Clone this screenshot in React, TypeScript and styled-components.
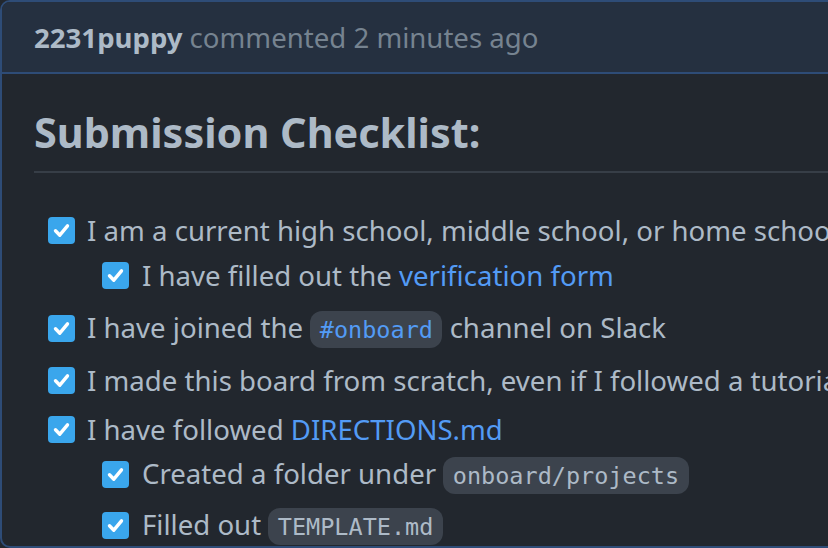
import React from 'react'
import styled, { createGlobalStyle } from 'styled-components'

const GlobalStyle = createGlobalStyle`
    html, body {
        margin: 0;
        padding: 0;
        background: #22272e;
        overflow: hidden;
    }
    body {
        font-family: "Noto Sans", "Open Sans", sans-serif;
        color: #adbac7;
    }
`

const Comment = styled.div`
    width: 960px;
    border: 2px solid #2e4c77;
    border-radius: 10px;
    overflow: hidden;
    background: #22272e;
`

const Header = styled.div`
    height: 70px;
    display: flex;
    align-items: center;
    padding-left: 32px;
    background: #253040;
    border-bottom: 2px solid #2e4c77;
    font-size: 27.6px;
    white-space: nowrap;
`

const Author = styled.span`
    font-weight: 700;
    color: #adbac7;
`

const Meta = styled.span`
    color: #768390;
    margin-left: 7px;
`

const Body = styled.div`
    padding: 32px 32px 0 32px;
`

const Title = styled.h2`
    margin: 0;
    font-size: 41.4px;
    font-weight: 700;
    line-height: 52px;
    padding-bottom: 13px;
    border-bottom: 2px solid #373e47;
    color: #adbac7;
`

const TaskList = styled.ul`
    list-style: none;
    margin: 36px 0 0 0;
    padding: 0;
`

const Task = styled.li<{ $depth: number; $space: number }>`
    display: flex;
    align-items: center;
    height: 42px;
    margin-top: ${p => p.$space}px;
    padding-left: ${p => 14 + p.$depth * 54}px;
    font-size: 27.6px;
    line-height: 42px;
    white-space: nowrap;
`

const Box = styled.span<{ $depth: number }>`
    flex: none;
    width: 27px;
    height: 27px;
    border-radius: 4px;
    background: #3aa6ec;
    display: flex;
    align-items: center;
    justify-content: center;
    margin-right: ${p => (p.$depth ? 13 : 12)}px;
`

const Link = styled.a`
    color: #539bf5;
    text-decoration: none;
`

const Code = styled.code<{ $link?: boolean }>`
    font-family: "DejaVu Sans Mono", "Liberation Mono", monospace;
    font-size: 23.5px;
    padding: 4.8px 9.5px;
    border-radius: 12px;
    background: #3c434d;
    color: ${p => (p.$link ? '#539bf5' : '#adbac7')};
`

const Check: React.FC<{ depth: number }> = ({ depth }) => (
    <Box $depth={depth}>
        <svg width="27" height="27" viewBox="0 0 27 27">
            <polyline
                points="7.5,13.8 11.8,18.2 19.5,8.8"
                fill="none"
                stroke="#ffffff"
                strokeWidth="3.4"
                strokeLinecap="round"
                strokeLinejoin="round"
            />
        </svg>
    </Box>
)

interface IItem {
    depth: number
    space: number
    content: React.ReactNode
}

const items: IItem[] = [
    { depth: 0, space: 0, content: <>I am a current high school, middle school, or home schooled student</> },
    { depth: 1, space: 3, content: <>I have filled out the <Link href="#">verification form</Link></> },
    { depth: 0, space: 11, content: <>I have joined the <Code $link>#onboard</Code> channel on Slack</> },
    { depth: 0, space: 10, content: <>I made this board from scratch, even if I followed a tutorial</> },
    { depth: 0, space: 7, content: <>I have followed <Link href="#">DIRECTIONS.md</Link></> },
    { depth: 1, space: 3, content: <>Created a folder under <Code>onboard/projects</Code></> },
    { depth: 1, space: 9, content: <>Filled out <Code>TEMPLATE.md</Code></> },
]

const App: React.FC = () => {
    return <>
        <GlobalStyle />
        <Comment>
            <Header>
                <Author>2231puppy</Author>
                <Meta>commented 2 minutes ago</Meta>
            </Header>
            <Body>
                <Title>Submission Checklist:</Title>
                <TaskList>
                    {items.map((item, i) => {
                        return <Task key={i} $depth={item.depth} $space={item.space}>
                            <Check depth={item.depth} />
                            <span>{item.content}</span>
                        </Task>
                    })}
                </TaskList>
            </Body>
        </Comment>
    </>
}

export default App
